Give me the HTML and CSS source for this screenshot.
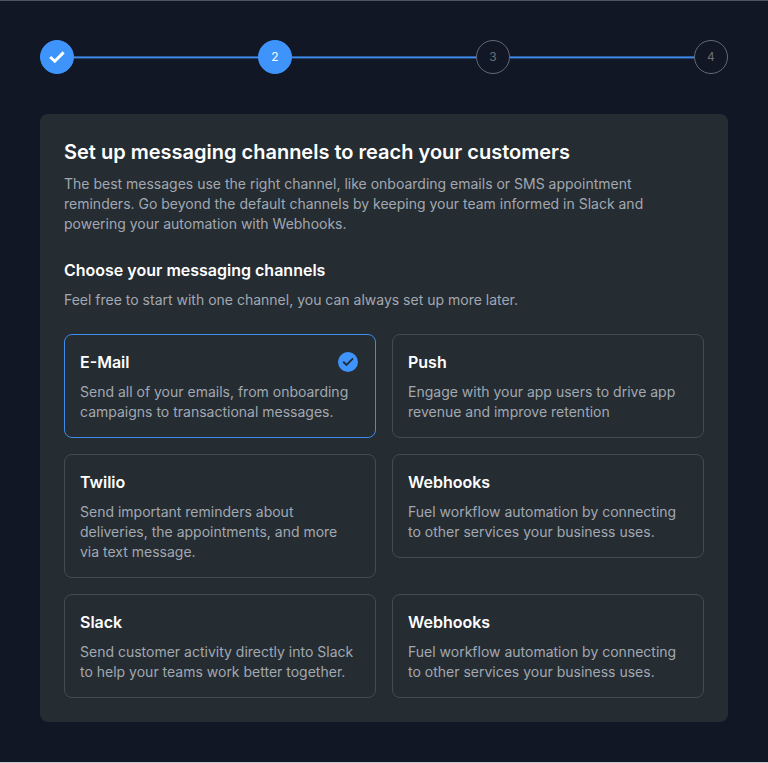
FILE: index.html
```html
<!DOCTYPE html>
<html lang="en">
<head>
<meta charset="utf-8">
<title>Messaging channels</title>
<link rel="stylesheet" href="styles.css">
</head>
<body>
<main class="page">
  <nav class="stepper">
    <span class="step step-on"><svg width="16" height="12" viewBox="0 0 16 12"><path d="M1.2 6L5.8 10.2L14.6 1.4" fill="none" stroke="currentColor" stroke-width="2.9"/></svg></span>
    <span class="line"></span>
    <span class="step step-on">2</span>
    <span class="line"></span>
    <span class="step">3</span>
    <span class="line"></span>
    <span class="step">4</span>
  </nav>
  <section class="panel">
    <h1>Set up messaging channels to reach your customers</h1>
    <p>The best messages use the right channel, like onboarding emails or SMS appointment<br>reminders. Go beyond the default channels by keeping your team informed in Slack and<br>powering your automation with Webhooks.</p>
    <h2 class="subhead">Choose your messaging channels</h2>
    <p>Feel free to start with one channel, you can always set up more later.</p>
    <div class="grid">
      <article class="card selected">
        <div class="card-head"><h2>E-Mail</h2><svg class="badge" width="20" height="20" viewBox="0 0 20 20"><circle cx="10" cy="10" r="10" fill="#3f94fb"/><path d="M5.2 9.7L8.5 12.9L15 6.4" fill="none" stroke="#242b32" stroke-width="1.9"/></svg></div>
        <p>Send all of your emails, from onboarding<br>campaigns to transactional messages.</p>
      </article>
      <article class="card"><h2>Push</h2><p>Engage with your app users to drive app<br>revenue and improve retention</p></article>
      <article class="card"><h2>Twilio</h2><p>Send important reminders about<br>deliveries, the appointments, and more<br>via text message.</p></article>
      <article class="card"><h2>Webhooks</h2><p>Fuel workflow automation by connecting<br>to other services your business uses.</p></article>
      <article class="card"><h2>Slack</h2><p>Send customer activity directly into Slack<br>to help your teams work better together.</p></article>
      <article class="card"><h2>Webhooks</h2><p>Fuel workflow automation by connecting<br>to other services your business uses.</p></article>
    </div>
  </section>
</main>
</body>
</html>
```
FILE: styles.css
```css
* { box-sizing: border-box; }
body { margin: 0; background: #111725; font-family: Inter, sans-serif; }
.page {
  height: 763px;
  padding: 39px 40px 0;
  border-top: 1px solid #4b5565;
  border-bottom: 1px solid #c9cbd0;
}
.stepper { display: flex; align-items: center; height: 34px; margin-bottom: 40px; }
.step {
  width: 34px;
  height: 34px;
  border: 1px solid #636974;
  border-radius: 50%;
  display: flex;
  align-items: center;
  justify-content: center;
  color: #6a707b;
  font-size: 12px;
  line-height: 16px;
}
.step-on { background: #3f94fb; border-color: #3f94fb; color: #fff; }
.line { flex: 1; height: 2px; background: #3f8beb; transform: translateY(.4px); }
.panel { height: 608px; padding: 24px; border-radius: 8px; background: #252c32; }
h1, h2, p { margin: 0; white-space: nowrap; }
h1 { color: #fff; font-size: 20px; line-height: 28px; font-weight: 600; margin-bottom: 8px; }
h2 { color: #fff; font-size: 16px; line-height: 24px; font-weight: 600; margin-bottom: 8px; }
p { color: #a2a8b1; font-size: 14px; line-height: 20px; }
.subhead { margin-top: 24px; }
.grid {
  display: grid;
  grid-template-columns: repeat(2, minmax(0, 1fr));
  align-items: start;
  gap: 16px;
  margin-top: 24px;
}
.card { padding: 15px; border: 1px solid #434c53; border-radius: 8px; }
.selected { border-color: #3f8beb; }
.card-head { display: flex; justify-content: space-between; }
.badge { margin: 2px 2px 0 0; }
```
